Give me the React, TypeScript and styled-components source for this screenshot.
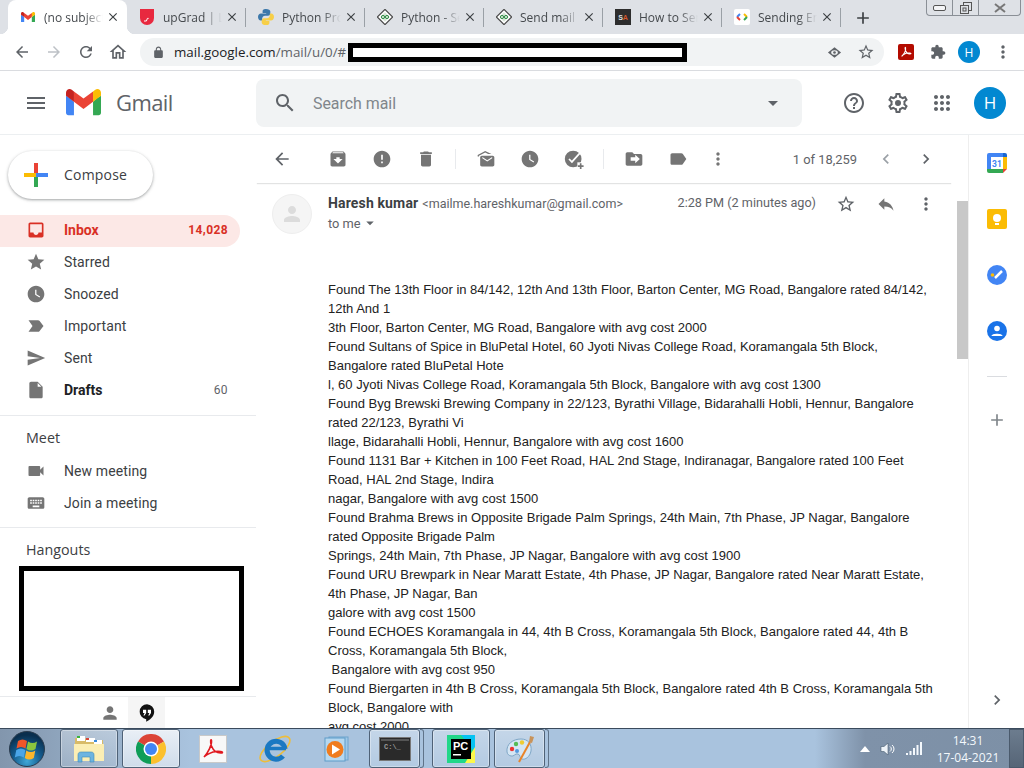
import styled, { createGlobalStyle } from "styled-components";

const Global = createGlobalStyle`
    html, body {
        margin: 0;
        padding: 0;
        overflow: hidden;
        background: #fff;
    }
`;

const ICON = {
    back: "M20 11H7.83l5.59-5.59L12 4l-8 8 8 8 1.41-1.41L7.83 13H20v-2z",
    forward: "M12 4l-1.41 1.41L16.17 11H4v2h12.17l-5.58 5.59L12 20l8-8z",
    reload: "M17.65 6.35C16.2 4.9 14.21 4 12 4c-4.42 0-7.99 3.58-7.99 8s3.57 8 7.99 8c3.73 0 6.84-2.55 7.73-6h-2.08c-.82 2.33-3.04 4-5.65 4-3.31 0-6-2.69-6-6s2.69-6 6-6c1.66 0 3.14.69 4.22 1.78L13 11h7V4l-2.35 2.35z",
    home: "M12 5.69l5 4.5V18h-2v-6H9v6H7v-7.81l5-4.5M12 3L2 12h3v8h6v-6h2v6h6v-8h3L12 3z",
    lock: "M18 8h-1V6c0-2.76-2.24-5-5-5S7 3.24 7 6v2H6c-1.1 0-2 .9-2 2v10c0 1.1.9 2 2 2h12c1.1 0 2-.9 2-2V10c0-1.1-.9-2-2-2zM9 6c0-1.66 1.34-3 3-3s3 1.34 3 3v2H9V6z",
    puzzle: "M20.5 11H19V7c0-1.1-.9-2-2-2h-4V3.5C13 2.12 11.88 1 10.5 1S8 2.12 8 3.5V5H4c-1.1 0-1.99.9-1.99 2v3.8H3.5c1.49 0 2.7 1.21 2.7 2.7s-1.21 2.7-2.7 2.7H2V20c0 1.1.9 2 2 2h3.8v-1.5c0-1.49 1.21-2.7 2.7-2.7 1.49 0 2.7 1.21 2.7 2.7V22H17c1.1 0 2-.9 2-2v-4h1.5c1.38 0 2.5-1.12 2.5-2.5S21.88 11 20.5 11z",
    search: "M15.5 14h-.79l-.28-.27C15.41 12.59 16 11.11 16 9.5 16 5.91 13.09 3 9.5 3S3 5.91 3 9.5 5.91 16 9.5 16c1.61 0 3.09-.59 4.23-1.57l.27.28v.79l5 4.99L20.49 19l-4.99-5zm-6 0C7.01 14 5 11.99 5 9.5S7.01 5 9.5 5 14 7.01 14 9.5 11.99 14 9.5 14z",
    menu: "M3 18h18v-2H3v2zm0-5h18v-2H3v2zm0-7v2h18V6H3z",
    help: "M11 18h2v-2h-2v2zm1-16C6.48 2 2 6.48 2 12s4.48 10 10 10 10-4.48 10-10S17.52 2 12 2zm0 18c-4.41 0-8-3.59-8-8s3.59-8 8-8 8 3.59 8 8-3.59 8-8 8zm0-14c-2.21 0-4 1.79-4 4h2c0-1.1.9-2 2-2s2 .9 2 2c0 2-3 1.75-3 5h2c0-2.25 3-2.5 3-5 0-2.21-1.79-4-4-4z",
    gear: "M19.43 12.98c.04-.32.07-.64.07-.98 0-.34-.03-.66-.07-.98l2.11-1.65c.19-.15.24-.42.12-.64l-2-3.46c-.09-.16-.26-.25-.44-.25-.06 0-.12.01-.17.03l-2.49 1c-.52-.4-1.08-.73-1.69-.98l-.38-2.65C14.46 2.18 14.25 2 14 2h-4c-.25 0-.46.18-.49.42l-.38 2.65c-.61.25-1.17.59-1.69.98l-2.49-1c-.06-.02-.12-.03-.18-.03-.17 0-.34.09-.43.25l-2 3.46c-.13.22-.07.49.12.64l2.11 1.65c-.04.32-.07.65-.07.98 0 .33.03.66.07.98l-2.11 1.65c-.19.15-.24.42-.12.64l2 3.46c.09.16.26.25.44.25.06 0 .12-.01.17-.03l2.49-1c.52.4 1.08.73 1.69.98l.38 2.65c.03.24.24.42.49.42h4c.25 0 .46-.18.49-.42l.38-2.65c.61-.25 1.17-.59 1.69-.98l2.49 1c.06.02.12.03.18.03.17 0 .34-.09.43-.25l2-3.46c.12-.22.07-.49-.12-.64l-2.11-1.65zm-1.98-1.71c.04.31.05.52.05.73 0 .21-.02.43-.05.73l-.14 1.13.89.7 1.08.84-.7 1.21-1.27-.51-1.04-.42-.9.68c-.43.32-.84.56-1.25.73l-1.06.43-.16 1.13-.2 1.35h-1.4l-.19-1.35-.16-1.13-1.06-.43c-.43-.18-.83-.41-1.23-.71l-.91-.7-1.06.43-1.27.51-.7-1.21 1.08-.84.89-.7-.14-1.13c-.03-.31-.05-.54-.05-.74s.02-.43.05-.73l.14-1.13-.89-.7-1.08-.84.7-1.21 1.27.51 1.04.42.9-.68c.43-.32.84-.56 1.25-.73l1.06-.43.16-1.13.2-1.35h1.39l.19 1.35.16 1.13 1.06.43c.43.18.83.41 1.23.71l.91.7 1.06-.43 1.27-.51.7 1.21-1.07.85-.89.7.14 1.13zM12 9a3 3 0 1 0 0 6 3 3 0 0 0 0-6z",
    inbox: "M19 3H4.99c-1.11 0-1.98.89-1.98 2L3 19c0 1.1.88 2 1.99 2H19c1.1 0 2-.9 2-2V5c0-1.11-.9-2-2-2zm0 12h-4c0 1.66-1.35 3-3 3s-3-1.34-3-3H4.99V5H19v10z",
    star: "M12 17.27L18.18 21l-1.64-7.03L22 9.24l-7.19-.61L12 2 9.19 8.63 2 9.24l5.46 4.73L5.82 21z",
    starLine: "M22 9.24l-7.19-.62L12 2 9.19 8.63 2 9.24l5.46 4.73L5.82 21 12 17.27 18.18 21l-1.63-7.03L22 9.24zM12 15.4l-3.76 2.27 1-4.28-3.32-2.88 4.38-.38L12 6.1l1.71 4.04 4.38.38-3.32 2.88 1 4.28L12 15.4z",
    clock: "M12 2C6.5 2 2 6.5 2 12s4.5 10 10 10 10-4.5 10-10S17.5 2 12 2zm4.2 14.2L11 13V7h1.5v5.2l4.5 2.7-.8 1.3z",
    important: "M3 19l11.5.01c.67 0 1.27-.33 1.63-.84L21 12l-4.87-6.16c-.36-.51-.96-.84-1.63-.84L3 5.01 7.84 12 3 19z",
    send: "M2.01 21L23 12 2.01 3 2 10l15 2-15 2z",
    file: "M14 2H6c-1.1 0-1.99.9-1.99 2L4 20c0 1.1.89 2 1.99 2H18c1.1 0 2-.9 2-2V8l-6-6zm0 1.5L18.5 8H14V3.5z",
    video: "M17 10.5V7c0-.55-.45-1-1-1H4c-.55 0-1 .45-1 1v10c0 .55.45 1 1 1h12c.55 0 1-.45 1-1v-3.5l4 4v-11l-4 4z",
    keyboard: "M20 5H4c-1.1 0-1.99.9-1.99 2L2 17c0 1.1.9 2 2 2h16c1.1 0 2-.9 2-2V7c0-1.1-.9-2-2-2zm-9 3h2v2h-2V8zm0 3h2v2h-2v-2zM8 8h2v2H8V8zm0 3h2v2H8v-2zm-1 2H5v-2h2v2zm0-3H5V8h2v2zm9 7H8v-2h8v2zm0-4h-2v-2h2v2zm0-3h-2V8h2v2zm3 3h-2v-2h2v2zm0-3h-2V8h2v2z",
    person: "M12 12c2.21 0 4-1.79 4-4s-1.79-4-4-4-4 1.79-4 4 1.79 4 4 4zm0 2c-2.67 0-8 1.34-8 4v2h16v-2c0-2.66-5.33-4-8-4z",
    archive: "M20.54 5.23l-1.39-1.68C18.88 3.21 18.47 3 18 3H6c-.47 0-.88.21-1.16.55L3.46 5.23C3.17 5.57 3 6.02 3 6.5V19c0 1.1.9 2 2 2h14c1.1 0 2-.9 2-2V6.5c0-.48-.17-.93-.46-1.27zM12 17.5L6.5 12H10v-2h4v2h3.5L12 17.5zM5.12 5l.81-1h12l.94 1H5.12z",
    spam: "M12 2C6.48 2 2 6.48 2 12s4.48 10 10 10 10-4.48 10-10S17.52 2 12 2zm1 15h-2v-2h2v2zm0-4h-2V7h2v6z",
    trash: "M6 19c0 1.1.9 2 2 2h8c1.1 0 2-.9 2-2V7H6v12zM19 4h-3.5l-1-1h-5l-1 1H5v2h14V4z",
    unread: "M2 9V7.200L11 2.500l7.500 3.500h-3.900L11 4.300 3.600 8.200 3.600 9H2zM7 8h13c1.100 0 2 .9 2 2v9c0 1.100-.9 2-2 2H7c-1.100 0-2-.9-2-2v-9c0-1.100.9-2 2-2zm.6 3l5.900 4 5.900-4V9.600l-5.900 3.900-5.900-3.900V11z",
    move: "M20 6h-8l-2-2H4c-1.1 0-1.99.9-1.99 2L2 18c0 1.1.9 2 2 2h16c1.1 0 2-.9 2-2V8c0-1.1-.9-2-2-2zm-6.5 11v-3H8v-4h5.5V7l5.5 5-5.5 5z",
    label: "M17.63 5.84C17.27 5.33 16.67 5 16 5L5 5.01C3.9 5.01 3 5.9 3 7v10c0 1.1.9 1.99 2 1.99L16 19c.67 0 1.27-.33 1.63-.84L22 12l-4.37-6.16z",
    reply: "M10 9V5l-7 7 7 7v-4.1c5 0 8.5 1.6 11 5.1-1-5-4-10-11-11z",
    more: "M12 8c1.1 0 2-.9 2-2s-.9-2-2-2-2 .9-2 2 .9 2 2 2zm0 2c-1.1 0-2 .9-2 2s.9 2 2 2 2-.9 2-2-.9-2-2-2zm0 6c-1.1 0-2 .9-2 2s.9 2 2 2 2-.9 2-2-.9-2-2-2z",
    prev: "M15.41 7.41L14 6l-6 6 6 6 1.41-1.41L10.83 12z",
    next: "M10 6L8.59 7.41 13.17 12l-4.58 4.59L10 18l6-6z",
    plus: "M19 13h-6v6h-2v-6H5v-2h6V5h2v6h6v2z",
    close: "M19 6.41L17.59 5 12 10.59 6.41 5 5 6.41 10.59 12 5 17.59 6.41 19 12 13.41 17.59 19 19 17.59 13.41 12z",
    caret: "M7 10l5 5 5-5z",
    apps: "M6 8c1.1 0 2-.9 2-2s-.9-2-2-2-2 .9-2 2 .9 2 2 2zm6 12c1.1 0 2-.9 2-2s-.9-2-2-2-2 .9-2 2 .9 2 2 2zm-6 0c1.1 0 2-.9 2-2s-.9-2-2-2-2 .9-2 2 .9 2 2 2zm0-6c1.1 0 2-.9 2-2s-.9-2-2-2-2 .9-2 2 .9 2 2 2zm6 0c1.1 0 2-.9 2-2s-.9-2-2-2-2 .9-2 2 .9 2 2 2zm4-8c0 1.1.9 2 2 2s2-.9 2-2-.9-2-2-2-2 .9-2 2zm-4 2c1.1 0 2-.9 2-2s-.9-2-2-2-2 .9-2 2 .9 2 2 2zm6 6c1.1 0 2-.9 2-2s-.9-2-2-2-2 .9-2 2 .9 2 2 2zm0 6c1.1 0 2-.9 2-2s-.9-2-2-2-2 .9-2 2 .9 2 2 2z",
};

const GlyphSvg = styled.svg<{ $size: number; $color: string }>`
    display: block;
    flex: none;
    width: ${(p) => p.$size}px;
    height: ${(p) => p.$size}px;
    fill: ${(p) => p.$color};
`;

const Art = styled.svg`
    display: block;
    flex: none;
`;

function Glyph({ d, size = 20, color = "#5f6368" }: { d: string; size?: number; color?: string }) {
    return (
        <GlyphSvg viewBox="0 0 24 24" $size={size} $color={color}>
            <path d={d} />
        </GlyphSvg>
    );
}

function GmailMark({ width }: { width: number }) {
    return (
        <Art viewBox="0 0 256 193" width={width} height={(width * 193) / 256}>
            <path fill="#4285F4" d="M58.182 192.05V93.14L27.507 65.077 0 49.504v125.091c0 9.658 7.825 17.455 17.455 17.455h40.727Z" />
            <path fill="#34A853" d="M197.818 192.05h40.727c9.659 0 17.455-7.826 17.455-17.455V49.505l-31.156 17.837-27.026 25.798v98.91Z" />
            <path fill="#EA4335" d="m58.182 93.14-4.174-38.647 4.174-36.989L128 69.868l69.818-52.364 4.669 34.992-4.669 40.644L128 145.504z" />
            <path fill="#FBBC04" d="M197.818 17.504V93.14L256 49.504V26.231c0-21.585-24.64-33.89-41.89-20.945l-16.292 12.218Z" />
            <path fill="#C5221F" d="m0 49.504 26.759 20.07L58.182 93.14V17.504L41.89 5.286C24.61-7.66 0 4.646 0 26.23v23.273Z" />
        </Art>
    );
}

function DiamondFavicon() {
    return (
        <Art viewBox="0 0 16 16" width="16" height="16">
            <rect x="2.6" y="2.6" width="10.8" height="10.8" transform="rotate(45 8 8)" fill="#fff" stroke="#4a4a4a" strokeWidth="1.2" />
            <rect x="4.6" y="4.6" width="6.8" height="6.8" transform="rotate(45 8 8)" fill="#d8e6d8" />
            <circle cx="6" cy="8" r="1.6" fill="none" stroke="#2f8d46" strokeWidth="1" />
            <circle cx="10" cy="8" r="1.6" fill="none" stroke="#2f8d46" strokeWidth="1" />
        </Art>
    );
}

const SaBadge = styled.span`
    display: flex;
    align-items: center;
    justify-content: center;
    width: 16px;
    height: 16px;
    background: #2d2d2d;
    color: #e0e0e0;
    font: bold 7px "Liberation Sans", sans-serif;
    span {
        color: #d4562a;
    }
`;

const TAB_ICONS = [
    <GmailMark width={14} key="g" />,
    <Art viewBox="0 0 16 16" width="16" height="16" key="u">
        <path d="M1 0h14v9a7 7 0 0 1-14 0z" fill="#e8293f" />
        <path d="M5 12h2.4l1-2.6h1.2" fill="none" stroke="#fff" strokeWidth="1" />
    </Art>,
    <Art viewBox="0 0 16 16" width="16" height="16" key="p">
        <path d="M8 0C5 0 4.6 1.2 4.6 2.6V4h3.6v.6H3C1.300 4.600 0 6 0 8s1.200 3.400 2.800 3.400h1.400V9.600c0-1.500 1.300-2.800 2.800-2.800h3c1.200 0 2.300-1 2.300-2.300V2.600C12.300 1 10.600 0 8 0z" fill="#3c78aa" />
        <path d="M8 16c3 0 3.400-1.200 3.400-2.600V12H7.800v-.6H13c1.700 0 3-1.400 3-3.400s-1.200-3.400-2.800-3.400h-1.400v1.800c0 1.500-1.300 2.800-2.800 2.800H6c-1.200 0-2.300 1-2.300 2.300v1.900C3.700 15 5.400 16 8 16z" fill="#f7cf48" />
    </Art>,
    <DiamondFavicon key="d1" />,
    <DiamondFavicon key="d2" />,
    <SaBadge key="s">
        S<span>A</span>
    </SaBadge>,
    <Art viewBox="0 0 16 16" width="16" height="16" key="c">
        <rect width="16" height="16" rx="2" fill="#fff" />
        <path d="M6 5L3 8" stroke="#4285f4" strokeWidth="2" />
        <path d="M3 8l3 3" stroke="#ea4335" strokeWidth="2" />
        <path d="M10 5l3 3" stroke="#fbbc04" strokeWidth="2" />
        <path d="M13 8l-3 3" stroke="#34a853" strokeWidth="2" />
    </Art>,
];

const TABS = ["(no subject)", "upGrad | Learn", "Python Program", "Python - Send", "Send mail from", "How to Send", "Sending Email"];

const Screen = styled.div`
    display: flex;
    flex-direction: column;
    width: 1024px;
    height: 768px;
    overflow: hidden;
    font-family: Roboto, "Liberation Sans", sans-serif;
    color: #202124;
`;

const TabStrip = styled.div`
    display: flex;
    flex: none;
    height: 34px;
    padding-left: 8px;
    background: #dee1e6;
`;

const Tab = styled.div<{ $active: boolean; $edge: boolean }>`
    position: relative;
    display: flex;
    align-items: center;
    box-sizing: border-box;
    width: 119px;
    padding: 0 7px 0 12px;
    background: ${(p) => (p.$active ? "#fff" : "transparent")};
    border-radius: 8px 8px 0 0;

    &::after {
        content: "";
        display: ${(p) => (p.$edge ? "block" : "none")};
        position: absolute;
        right: 0;
        top: 8px;
        bottom: 7px;
        width: 1px;
        background: #9aa0a6;
    }

    &::before {
        content: "";
        display: ${(p) => (p.$active ? "block" : "none")};
        position: absolute;
        left: -8px;
        right: -8px;
        bottom: 0;
        height: 8px;
        background:
            radial-gradient(circle at 0 0, #dee1e6 8px, #fff 8.5px) left / 8px 8px no-repeat,
            radial-gradient(circle at 100% 0, #dee1e6 8px, #fff 8.5px) right / 8px 8px no-repeat;
    }
`;

const TabIcon = styled.span`
    display: flex;
    justify-content: center;
    width: 16px;
    flex: none;
`;

const TabTitle = styled.span`
    flex: 1;
    min-width: 0;
    margin-left: 8px;
    overflow: hidden;
    white-space: nowrap;
    font: 12px "Open Sans", sans-serif;
    color: #45494d;
    -webkit-mask-image: linear-gradient(90deg, #000 65%, transparent 95%);
    mask-image: linear-gradient(90deg, #000 65%, transparent 95%);
`;

const NewTab = styled.span`
    margin: 1px 0 0 12px;
    align-self: center;
`;

const WindowControls = styled.div`
    display: flex;
    align-self: flex-start;
    box-sizing: border-box;
    height: 16px;
    margin: 0 3px 0 auto;
    border: 1px solid #8a8f96;
    border-top: 0;
    border-radius: 0 0 4px 4px;
`;

const WindowButton = styled.span<{ $width: number }>`
    display: flex;
    align-items: center;
    justify-content: center;
    width: ${(p) => p.$width}px;
    border-right: 1px solid #8a8f96;
    &:last-child {
        border-right: 0;
    }
`;

const Toolbar = styled.div`
    display: flex;
    flex: none;
    align-items: center;
    box-sizing: border-box;
    height: 37px;
    padding-left: 6px;
    border-bottom: 1px solid #dadce0;
`;

const ToolSlot = styled.span<{ $width?: number }>`
    display: flex;
    align-items: center;
    justify-content: center;
    width: ${(p) => p.$width ?? 32}px;
    flex: none;
`;

const Omnibox = styled.div`
    display: flex;
    flex: none;
    align-items: center;
    width: 744px;
    height: 28px;
    margin: 0 6px;
    border-radius: 14px;
    background: #f1f3f4;
`;

const LockIcon = styled.span`
    margin-left: 12px;
`;

const Url = styled.span`
    margin-left: 9px;
    font: 13.35px "Open Sans", sans-serif;
    white-space: nowrap;
    color: #5f6368;
    b {
        font-weight: 400;
        color: #202124;
    }
`;

const Redaction = styled.span`
    display: block;
    flex: none;
    box-sizing: border-box;
    width: 339px;
    height: 19px;
    margin-left: 2px;
    border: 5px solid #000;
    background: #fff;
`;

const OmniTools = styled.span`
    display: flex;
    align-items: center;
    margin-left: auto;
    margin-right: 2px;
`;

const AcrobatTile = styled.span`
    display: flex;
    align-items: center;
    justify-content: center;
    width: 16px;
    height: 16px;
    border-radius: 2px;
    background: #b30b00;
`;

const SmallAvatar = styled.span`
    display: flex;
    align-items: center;
    justify-content: center;
    width: 22px;
    height: 22px;
    border-radius: 50%;
    background: #0288d1;
    color: #fff;
    font: 12px "Open Sans", sans-serif;
`;

const AppHeader = styled.header`
    display: flex;
    flex: none;
    align-items: center;
    box-sizing: border-box;
    height: 64px;
    border-bottom: 1px solid #eceff1;
`;

const MenuSlot = styled.span`
    display: flex;
    justify-content: center;
    width: 48px;
    margin-left: 12px;
    margin-right: 6px;
`;

const Wordmark = styled.span`
    width: 140px;
    margin-left: 15px;
    padding-bottom: 2px;
    font: 22px "Open Sans", sans-serif;
    letter-spacing: -0.6px;
    color: #5f6368;
`;

const SearchBar = styled.div`
    display: flex;
    align-items: center;
    box-sizing: border-box;
    width: 546px;
    height: 48px;
    padding: 0 17px 0 17px;
    border-radius: 8px;
    background: #f1f3f4;
`;

const SearchText = styled.span`
    flex: 1;
    margin-left: 16px;
    padding-top: 1px;
    font-size: 15.9px;
    color: #80868b;
`;

const HeaderTools = styled.div`
    display: flex;
    align-items: center;
    margin-left: 30px;
`;

const HeaderSlot = styled.span`
    display: flex;
    justify-content: center;
    width: 44px;
`;

const Avatar = styled.span`
    display: flex;
    align-items: center;
    justify-content: center;
    width: 32px;
    height: 32px;
    margin-left: 10px;
    border-radius: 50%;
    background: #0288d1;
    color: #fff;
    font: 17px "Open Sans", sans-serif;
`;

const Workspace = styled.div`
    display: flex;
    flex: 1;
    min-height: 0;
`;

const Sidebar = styled.aside`
    display: flex;
    flex-direction: column;
    flex: none;
    width: 256px;
`;

const Compose = styled.div`
    display: flex;
    align-items: center;
    box-sizing: border-box;
    width: 145px;
    height: 48px;
    margin: 16px 0 16px 8px;
    padding-left: 16px;
    border-radius: 24px;
    background: #fff;
    box-shadow: 0 1px 2px rgba(60, 64, 67, 0.3), 0 1px 3px 1px rgba(60, 64, 67, 0.15);
    font: 500 14px "Open Sans", sans-serif;
    letter-spacing: 0.2px;
    color: #3c4043;
`;

const ComposeLabel = styled.span`
    margin-left: 16px;
    padding-bottom: 2px;
`;

const NavRow = styled.div<{ $active?: boolean; $bold?: boolean }>`
    display: flex;
    align-items: center;
    box-sizing: border-box;
    width: 240px;
    height: 32px;
    padding: 0 12px 2px 26px;
    border-radius: 0 16px 16px 0;
    background: ${(p) => (p.$active ? "#fce8e6" : "transparent")};
    font-size: 14px;
    font-weight: ${(p) => (p.$bold || p.$active ? 700 : 400)};
    letter-spacing: ${(p) => (p.$bold || p.$active ? 0 : 0.1)}px;
    color: ${(p) => (p.$active ? "#d93025" : p.$bold ? "#202124" : "#3c4043")};
`;

const NavLabel = styled.span`
    flex: 1;
    margin-left: 18px;
`;

const NavCount = styled.span<{ $active?: boolean }>`
    font-size: 12px;
    font-weight: ${(p) => (p.$active ? 700 : 400)};
    letter-spacing: 0.4px;
    color: ${(p) => (p.$active ? "#d93025" : "#5f6368")};
`;

const Rule = styled.div<{ $top: number }>`
    flex: none;
    height: 1px;
    margin-top: ${(p) => p.$top}px;
    background: #e8eaed;
`;

const SectionTitle = styled.div`
    height: 18px;
    margin: 13px 0 0 26px;
    font: 14.3px/18px "Open Sans", sans-serif;
    color: #3c4043;
`;

const MeetList = styled.div`
    margin-top: 9px;
`;

const HangoutsBox = styled.div`
    box-sizing: border-box;
    width: 225px;
    height: 125px;
    margin: 7px 0 5px 19px;
    border: 5px solid #000;
    background: #fff;
`;

const SideFooter = styled.div`
    display: flex;
    flex: 1;
    justify-content: center;
    border-top: 1px solid #e8eaed;
`;

const FooterSlot = styled.span<{ $on?: boolean }>`
    display: flex;
    align-items: center;
    justify-content: center;
    width: 37px;
    background: ${(p) => (p.$on ? "#f5f5f5" : "transparent")};
`;

const Main = styled.main`
    display: flex;
    flex-direction: column;
    flex: 1;
    min-width: 0;
`;

const ActionBar = styled.div`
    display: flex;
    flex: none;
    align-items: center;
    position: relative;
    box-sizing: border-box;
    width: 696px;
    height: 48px;
    padding: 0 6px;
    box-shadow: 0 2px 1px -1px rgba(60, 64, 67, 0.15);
`;

const ActionSlot = styled.span<{ $left?: number }>`
    display: flex;
    justify-content: center;
    width: 40px;
    flex: none;
    margin-left: ${(p) => p.$left ?? 0}px;
`;

const ActionDivider = styled.span`
    width: 1px;
    height: 20px;
    margin: 0 10px 0 9px;
    background: #e8eaed;
`;

const Pager = styled.span`
    margin: 0 9px 0 auto;
    font-size: 12.9px;
    color: #5f6368;
`;

const Reader = styled.div`
    display: flex;
    flex: 1;
    min-height: 0;
`;

const Message = styled.div`
    flex: 1;
    min-width: 0;
    overflow: hidden;
`;

const MessageHead = styled.div`
    display: flex;
    box-sizing: border-box;
    height: 61px;
    padding: 11px 11px 0 16px;
`;

const Face = styled.span`
    display: flex;
    align-items: center;
    justify-content: center;
    flex: none;
    box-sizing: border-box;
    width: 40px;
    height: 40px;
    border: 1px solid #eeeeee;
    border-radius: 50%;
    background: #f5f5f5;
`;

const Sender = styled.div`
    flex: 1;
    margin-left: 16px;
`;

const SenderLine = styled.div`
    height: 19px;
    font: 700 14px/18px Roboto, sans-serif;
    letter-spacing: 0.15px;
    color: #3c4043;
`;

const SenderMail = styled.span`
    margin-left: 4px;
    font-size: 12.5px;
    font-weight: 400;
    letter-spacing: 0;
    color: #5f6368;
`;

const ToMe = styled.div`
    display: flex;
    align-items: center;
    height: 20px;
    font-size: 12.8px;
    color: #5f6368;
`;

const Stamp = styled.span`
    height: 18px;
    margin-right: 10px;
    font-size: 12.65px;
    line-height: 18px;
    color: #5f6368;
`;

const HeadSlot = styled.span`
    display: flex;
    justify-content: center;
    width: 40px;
    height: 20px;
    flex: none;
`;

const MessageBody = styled.div`
    padding: 36px 0 0 72px;
    font: 13px/19px "Liberation Sans", Arial, sans-serif;
    color: #222;
    white-space: pre;
`;

const ScrollTrack = styled.div`
    flex: none;
    width: 11px;
    padding-top: 18px;
`;

const ScrollThumb = styled.div`
    height: 158px;
    background: #c8c8c8;
`;

const SidePanel = styled.aside`
    display: flex;
    flex-direction: column;
    align-items: center;
    flex: none;
    box-sizing: border-box;
    width: 56px;
    padding-top: 18px;
    border-left: 1px solid #eeeeee;
`;

const PanelSlot = styled.span<{ $gap?: number }>`
    display: flex;
    align-items: center;
    justify-content: center;
    height: 20px;
    margin-bottom: ${(p) => p.$gap ?? 36}px;
`;

const PanelRule = styled.span`
    width: 20px;
    height: 1px;
    margin-bottom: 33px;
    background: #dadce0;
`;

const PanelArrow = styled.span`
    display: block;
    margin-top: 260px;
`;

const Taskbar = styled.footer`
    display: flex;
    flex: none;
    align-items: stretch;
    box-sizing: border-box;
    height: 40px;
    border-top: 1px solid #3a4a5c;
    background: linear-gradient(90deg, #8296ad 0, #8ea4bc 58px, #a9c3de 190px, #a9c3de 815px, #7f92a9 865px, #7d90a6 100%);
`;

const Orb = styled.span`
    display: flex;
    align-items: center;
    width: 60px;
    padding-left: 9px;
    box-sizing: border-box;
    flex: none;
`;

const TaskButton = styled.span<{ $width?: number; $bright?: boolean; $gap?: number }>`
    position: relative;
    display: flex;
    align-items: center;
    justify-content: center;
    flex: none;
    box-sizing: border-box;
    width: ${(p) => p.$width ?? 58}px;
    margin-right: ${(p) => p.$gap ?? 4}px;
    border: 1px solid #4f6277;
    border-radius: 3px;
    background: ${(p) =>
        p.$bright
            ? "linear-gradient(180deg, #e9eff6, #cfdcea)"
            : "linear-gradient(180deg, rgba(255,255,255,.32), rgba(255,255,255,.12))"};
    box-shadow: inset 0 0 0 1px rgba(255, 255, 255, 0.35);
`;

const TaskStack = styled.span`
    width: 3px;
    flex: none;
    margin-right: 8px;
    border: 1px solid #5f7389;
    border-left: 0;
    border-radius: 0 3px 3px 0;
`;

const TaskPlain = styled.span<{ $width: number }>`
    display: flex;
    align-items: center;
    justify-content: center;
    flex: none;
    width: ${(p) => p.$width}px;
`;

const Tray = styled.div`
    display: flex;
    align-items: center;
    margin-left: auto;
`;

const TrayIcon = styled.span<{ $width: number; $left?: number; $right?: number }>`
    display: flex;
    justify-content: center;
    width: ${(p) => p.$width}px;
    margin-left: ${(p) => p.$left ?? 0}px;
    margin-right: ${(p) => p.$right ?? 0}px;
`;

const Clock = styled.div`
    width: 82px;
    font: 12px/17px "Open Sans", sans-serif;
    color: #f4f8fc;
    text-align: center;
`;

const ShowDesktop = styled.span`
    align-self: stretch;
    width: 15px;
    box-sizing: border-box;
    border: 1px solid #4a5a6c;
    background: linear-gradient(180deg, #6c7c8e, #566577);
`;

const LINES = [
    "Found The 13th Floor in 84/142, 12th And 13th Floor, Barton Center, MG Road, Bangalore rated 84/142,",
    "12th And 1",
    "3th Floor, Barton Center, MG Road, Bangalore with avg cost 2000",
    "Found Sultans of Spice in BluPetal Hotel, 60 Jyoti Nivas College Road, Koramangala 5th Block,",
    "Bangalore rated BluPetal Hote",
    "l, 60 Jyoti Nivas College Road, Koramangala 5th Block, Bangalore with avg cost 1300",
    "Found Byg Brewski Brewing Company in 22/123, Byrathi Village, Bidarahalli Hobli, Hennur, Bangalore",
    "rated 22/123, Byrathi Vi",
    "llage, Bidarahalli Hobli, Hennur, Bangalore with avg cost 1600",
    "Found 1131 Bar + Kitchen in 100 Feet Road, HAL 2nd Stage, Indiranagar, Bangalore rated 100 Feet",
    "Road, HAL 2nd Stage, Indira",
    "nagar, Bangalore with avg cost 1500",
    "Found Brahma Brews in Opposite Brigade Palm Springs, 24th Main, 7th Phase, JP Nagar, Bangalore",
    "rated Opposite Brigade Palm",
    "Springs, 24th Main, 7th Phase, JP Nagar, Bangalore with avg cost 1900",
    "Found URU Brewpark in Near Maratt Estate, 4th Phase, JP Nagar, Bangalore rated Near Maratt Estate,",
    "4th Phase, JP Nagar, Ban",
    "galore with avg cost 1500",
    "Found ECHOES Koramangala in 44, 4th B Cross, Koramangala 5th Block, Bangalore rated 44, 4th B",
    "Cross, Koramangala 5th Block,",
    " Bangalore with avg cost 950",
    "Found Biergarten in 4th B Cross, Koramangala 5th Block, Bangalore rated 4th B Cross, Koramangala 5th",
    "Block, Bangalore with",
    "avg cost 2000",
];

const NAV = [
    { label: "Inbox", d: ICON.inbox, count: "14,028", active: true },
    { label: "Starred", d: ICON.star },
    { label: "Snoozed", d: ICON.clock },
    { label: "Important", d: ICON.important },
    { label: "Sent", d: ICON.send },
    { label: "Drafts", d: ICON.file, count: "60", bold: true },
];

function AddTaskIcon() {
    return (
        <Art viewBox="0 0 24 24" width="20" height="20">
            <circle cx="11" cy="12" r="10" fill="#757575" />
            <path d="M6 12l3.500 3.500L19 5" fill="none" stroke="#fff" strokeWidth="2" />
            <path d="M19 3l2 2" stroke="#fff" strokeWidth="1" />
            <path d="M16 16h8v8h-8z" fill="#fff" />
            <path d="M19 17h2v2.500h2.500v2H21V24h-2v-2.500h-2.500v-2H19z" fill="#757575" />
        </Art>
    );
}

function ChromeLogo() {
    return (
        <Art viewBox="0 0 30 30" width="30" height="30">
            <path fill="#db4437" d="M15 15L2 7.500A15 15 0 0 1 28 7.500Z" />
            <path fill="#fbc02d" d="M15 15L28 7.500A15 15 0 0 1 15 30Z" />
            <path fill="#0f9d58" d="M15 15L15 30A15 15 0 0 1 2 7.500Z" />
            <circle cx="15" cy="15" r="7.500" fill="#fff" />
            <circle cx="15" cy="15" r="6" fill="#4285f4" />
        </Art>
    );
}

function WindowsOrb() {
    return (
        <Art viewBox="0 0 36 36" width="36" height="36">
            <defs>
                <radialGradient id="orb" cx="50%" cy="85%" r="75%">
                    <stop offset="0" stopColor="#3fa8d8" />
                    <stop offset="0.55" stopColor="#135a8c" />
                    <stop offset="1" stopColor="#0a2f4e" />
                </radialGradient>
            </defs>
            <circle cx="18" cy="18" r="17.500" fill="url(#orb)" stroke="#2a3b4d" />
            <path d="M9 10c3-2 6-2 9 0l-1.500 7.500c-3-2-6-2-9 0z" fill="#f0562a" />
            <path d="M19 10.500c3 2 6 2 9 0l-1.500 7.500c-3 2-6 2-9 0z" fill="#8cc63f" />
            <path d="M7.300 19c3-2 6-2 9 0l-1.500 7.500c-3-2-6-2-9 0z" fill="#4aa5e8" />
            <path d="M17.300 19.500c3 2 6 2 9 0l-1.500 7.500c-3 2-6 2-9 0z" fill="#fbb62c" />
        </Art>
    );
}

function FolderLogo() {
    return (
        <Art viewBox="0 0 32 28" width="32" height="28">
            <path d="M2 3h10l2 2h16v20H2z" fill="#d8bb68" />
            <rect x="4" y="1" width="8" height="5" fill="#fff" />
            <rect x="4" y="1" width="3" height="2" fill="#3cb43c" />
            <rect x="13" y="3" width="9" height="4" fill="#fff" />
            <rect x="13" y="3" width="3" height="2" fill="#d8483c" />
            <rect x="21" y="5" width="8" height="4" fill="#fff" />
            <rect x="21" y="5" width="3" height="2" fill="#3c8cdc" />
            <path d="M1 9h30v17H1z" fill="#fbeeb4" />
            <path d="M5 27v-7c0-2 1-3 3-3h10c2 0 3 1 3 3v7h-4v-5H9v5z" fill="#6db4e0" stroke="#3d89bb" strokeWidth=".6" />
        </Art>
    );
}

function PdfTile() {
    return (
        <Art viewBox="0 0 28 28" width="28" height="28">
            <rect x=".5" y=".5" width="27" height="27" fill="#f8f8f8" stroke="#c9c9c9" />
            <path d="M5 22C9 18 13 10 12.500 5.500C12 3.500 10.800 6 12.500 11C14.500 16 18 18.500 23 18C25 17 20 15.500 14 17C10 18.500 6.500 20 5 22Z" fill="none" stroke="#e0181f" strokeWidth="1.600" />
        </Art>
    );
}

function IeLogo() {
    return (
        <Art viewBox="0 0 34 32" width="34" height="32">
            <ellipse cx="17" cy="16" rx="18" ry="7.500" transform="rotate(-38 17 16)" fill="none" stroke="#eebd3a" strokeWidth="1.600" />
            <path d="M27 16A9 9 0 1 0 25 23" fill="none" stroke="#1a78c2" strokeWidth="5" />
            <path d="M11 15.500h17" stroke="#1a78c2" strokeWidth="3.500" />
        </Art>
    );
}

function PlayerLogo() {
    return (
        <Art viewBox="0 0 28 26" width="28" height="26">
            <rect x="6" y="1" width="19" height="23" fill="#9fc8e8" stroke="#6ea4cc" />
            <rect x="2" y="2" width="20" height="23" fill="#b6d8f0" stroke="#5f9cc8" />
            <circle cx="12" cy="13.500" r="8.500" fill="#f07c1e" />
            <path d="M9 8.500l8 5-8 5z" fill="#fff" />
        </Art>
    );
}

function ConsoleLogo() {
    return (
        <Art viewBox="0 0 32 24" width="32" height="24">
            <rect x=".5" y=".5" width="31" height="23" fill="#2a2a2a" stroke="#777" />
            <rect x="2" y="2" width="28" height="2" fill="#555" />
            <text x="5" y="12" fontFamily="Liberation Mono, monospace" fontSize="7" fontWeight="700" fill="#9a9a9a">C:\_</text>
        </Art>
    );
}

function PycharmLogo() {
    return (
        <Art viewBox="0 0 28 28" width="28" height="28">
            <rect width="28" height="28" fill="#21d789" />
            <path d="M14 0h14v18z" fill="#07c3f2" />
            <path d="M28 12v16H18z" fill="#fcf84a" />
            <rect x="4" y="4" width="20" height="20" fill="#000" />
            <text x="6" y="15" fontFamily="Liberation Sans, sans-serif" fontSize="11" fontWeight="700" fill="#fff">PC</text>
            <rect x="6" y="19" width="8" height="1.500" fill="#fff" />
        </Art>
    );
}

function PaintLogo() {
    return (
        <Art viewBox="0 0 30 30" width="30" height="30">
            <path d="M2 18C1 10 8 5 16 5c7 0 11 5 10 12-1 6-6 9-9 8-3-1-1-4-4-5-3-1-4 3-7 2-2-.5-3.500-1.500-4-4z" fill="#d5e6f4" stroke="#7ea6c6" />
            <circle cx="7" cy="15" r="2.200" fill="#e33" />
            <circle cx="11" cy="10" r="2.200" fill="#5b5" />
            <circle cx="17" cy="8.500" r="2.200" fill="#ec3" />
            <circle cx="12" cy="17" r="2" fill="#59d" />
            <path d="M14 28L25 8" stroke="#e8842a" strokeWidth="2" />
            <path d="M24 8l1-6 4 1-2 6z" fill="#c8935a" />
        </Art>
    );
}

export default function App() {
    return (
        <Screen>
            <Global />
            <TabStrip>
                {TABS.map((title, i) => (
                    <Tab key={title + i} $active={i === 0} $edge={i > 0}>
                        <TabIcon>{TAB_ICONS[i]}</TabIcon>
                        <TabTitle>{title}</TabTitle>
                        <Glyph d={ICON.close} size={14} color="#3c4043" />
                    </Tab>
                ))}
                <NewTab>
                    <Glyph d={ICON.plus} size={20} color="#3c4043" />
                </NewTab>
                <WindowControls>
                    <WindowButton $width={25}>
                        <svg width="13" height="6"><rect x=".5" y=".5" width="12" height="5" rx="1.500" fill="#f4f5f7" stroke="#555" /></svg>
                    </WindowButton>
                    <WindowButton $width={25}>
                        <svg width="12" height="12"><rect x="3.500" y=".5" width="8" height="8" fill="none" stroke="#555" /><rect x=".5" y="3.500" width="8" height="8" fill="#dee1e6" stroke="#555" /><rect x="3" y="6" width="3" height="3" fill="none" stroke="#555" /></svg>
                    </WindowButton>
                    <WindowButton $width={41}>
                        <svg width="12" height="10"><path d="M1 1l10 8M11 1L1 9" stroke="#777" strokeWidth="2" fill="none" /></svg>
                    </WindowButton>
                </WindowControls>
            </TabStrip>

            <Toolbar>
                <ToolSlot><Glyph d={ICON.back} size={18} color="#5f6368" /></ToolSlot>
                <ToolSlot><Glyph d={ICON.forward} size={18} color="#bdc1c6" /></ToolSlot>
                <ToolSlot><Glyph d={ICON.reload} size={18} color="#5f6368" /></ToolSlot>
                <ToolSlot><Glyph d={ICON.home} size={20} color="#5f6368" /></ToolSlot>
                <Omnibox>
                    <LockIcon><Glyph d={ICON.lock} size={13} color="#5f6368" /></LockIcon>
                    <Url><b>mail.google.com</b>/mail/u/0/#</Url>
                    <Redaction />
                    <OmniTools>
                        <ToolSlot>
                            <svg viewBox="0 0 16 16" width="15" height="15"><path d="M8 2.500L15 8l-7 5.500L1 8z" fill="#5f6368" /><path d="M4.500 8a3.500 2.500 0 0 1 7 0a3.500 2.500 0 0 1-7 0z" fill="#f1f3f4" /><circle cx="8" cy="8" r="1.400" fill="#5f6368" /></svg>
                        </ToolSlot>
                        <ToolSlot><Glyph d={ICON.starLine} size={18} color="#5f6368" /></ToolSlot>
                    </OmniTools>
                </Omnibox>
                <ToolSlot $width={32}>
                    <AcrobatTile>
                        <svg viewBox="0 0 16 16" width="14" height="14"><path d="M3 13C5.500 10.500 8 6 7.500 3C7 2 6.500 3.500 7.500 6.500C8.500 9 11 10.500 13.500 10C14.500 9.500 11.500 8.500 8 9.500C6 10.500 4 11.500 3 13Z" fill="none" stroke="#fff" strokeWidth="1.200" /></svg>
                    </AcrobatTile>
                </ToolSlot>
                <ToolSlot $width={32}><Glyph d={ICON.puzzle} size={16} color="#5f6368" /></ToolSlot>
                <ToolSlot $width={30}><SmallAvatar>H</SmallAvatar></ToolSlot>
                <ToolSlot $width={38}><Glyph d={ICON.more} size={20} color="#5f6368" /></ToolSlot>
            </Toolbar>

            <AppHeader>
                <MenuSlot><Glyph d={ICON.menu} size={24} /></MenuSlot>
                <GmailMark width={35} />
                <Wordmark>Gmail</Wordmark>
                <SearchBar>
                    <Glyph d={ICON.search} size={24} />
                    <SearchText>Search mail</SearchText>
                    <Glyph d={ICON.caret} size={24} />
                </SearchBar>
                <HeaderTools>
                    <HeaderSlot><Glyph d={ICON.help} size={24} /></HeaderSlot>
                    <HeaderSlot><Glyph d={ICON.gear} size={24} /></HeaderSlot>
                    <HeaderSlot><Glyph d={ICON.apps} size={24} /></HeaderSlot>
                    <Avatar>H</Avatar>
                </HeaderTools>
            </AppHeader>

            <Workspace>
                <Sidebar>
                    <Compose>
                        <Art viewBox="0 0 24 24" width="24" height="24">
                            <rect x="10" y="0" width="4" height="12" fill="#ea4335" />
                            <rect x="10" y="12" width="4" height="12" fill="#34a853" />
                            <rect x="0" y="10" width="12" height="4" fill="#fbbc04" />
                            <rect x="12" y="10" width="12" height="4" fill="#4285f4" />
                        </Art>
                        <ComposeLabel>Compose</ComposeLabel>
                    </Compose>
                    {NAV.map((n) => (
                        <NavRow key={n.label} $active={n.active} $bold={n.bold}>
                            <Glyph d={n.d} size={20} color={n.active ? "#d93025" : "#757575"} />
                            <NavLabel>{n.label}</NavLabel>
                            {n.count && <NavCount $active={n.active}>{n.count}</NavCount>}
                        </NavRow>
                    ))}
                    <Rule $top={8} />
                    <SectionTitle>Meet</SectionTitle>
                    <MeetList>
                        <NavRow>
                            <Glyph d={ICON.video} size={20} color="#757575" />
                            <NavLabel>New meeting</NavLabel>
                        </NavRow>
                        <NavRow>
                            <Glyph d={ICON.keyboard} size={20} color="#757575" />
                            <NavLabel>Join a meeting</NavLabel>
                        </NavRow>
                    </MeetList>
                    <Rule $top={7} />
                    <SectionTitle>Hangouts</SectionTitle>
                    <HangoutsBox />
                    <SideFooter>
                        <FooterSlot><Glyph d={ICON.person} size={20} color="#757575" /></FooterSlot>
                        <FooterSlot $on>
                            <Art viewBox="0 0 20 22" width="16" height="18">
                                <path d="M10 0a9.500 9.500 0 0 0-1 18.900V22c4-2 10-6 10-12.500A9.500 9.500 0 0 0 10 0z" fill="#111" />
                                <path d="M5 7h4v4l-2 3H5.500L7 11H5zM11 7h4v4l-2 3h-1.500L13 11h-2z" fill="#fff" />
                            </Art>
                        </FooterSlot>
                    </SideFooter>
                </Sidebar>

                <Main>
                    <ActionBar>
                        <ActionSlot><Glyph d={ICON.back} /></ActionSlot>
                        <ActionSlot $left={16}><Glyph d={ICON.archive} color="#757575" /></ActionSlot>
                        <ActionSlot $left={4}><Glyph d={ICON.spam} color="#757575" /></ActionSlot>
                        <ActionSlot $left={4}><Glyph d={ICON.trash} color="#757575" /></ActionSlot>
                        <ActionDivider />
                        <ActionSlot><Glyph d={ICON.unread} color="#757575" /></ActionSlot>
                        <ActionSlot $left={4}><Glyph d={ICON.clock} color="#757575" /></ActionSlot>
                        <ActionSlot $left={4}><AddTaskIcon /></ActionSlot>
                        <ActionDivider />
                        <ActionSlot><Glyph d={ICON.move} color="#757575" /></ActionSlot>
                        <ActionSlot $left={4}><Glyph d={ICON.label} color="#757575" /></ActionSlot>
                        <ActionSlot><Glyph d={ICON.more} color="#757575" /></ActionSlot>
                        <Pager>1 of 18,259</Pager>
                        <ActionSlot><Glyph d={ICON.prev} color="#9aa0a6" /></ActionSlot>
                        <ActionSlot><Glyph d={ICON.next} color="#5f6368" /></ActionSlot>
                    </ActionBar>
                    <Reader>
                        <Message>
                            <MessageHead>
                                <Face><Glyph d={ICON.person} size={24} color="#dcdcdc" /></Face>
                                <Sender>
                                    <SenderLine>
                                        Haresh kumar<SenderMail>&lt;mailme.hareshkumar@gmail.com&gt;</SenderMail>
                                    </SenderLine>
                                    <ToMe>
                                        to me
                                        <Glyph d={ICON.caret} size={18} />
                                    </ToMe>
                                </Sender>
                                <Stamp>2:28 PM (2 minutes ago)</Stamp>
                                <HeadSlot><Glyph d={ICON.starLine} color="#5f6368" /></HeadSlot>
                                <HeadSlot><Glyph d={ICON.reply} color="#757575" /></HeadSlot>
                                <HeadSlot><Glyph d={ICON.more} color="#5f6368" /></HeadSlot>
                            </MessageHead>
                            <MessageBody>
                                {LINES.map((l, i) => (
                                    <div key={i}>{l}</div>
                                ))}
                            </MessageBody>
                        </Message>
                        <ScrollTrack>
                            <ScrollThumb />
                        </ScrollTrack>
                    </Reader>
                </Main>

                <SidePanel>
                    <PanelSlot>
                        <Art viewBox="0 0 20 20" width="20" height="20">
                            <rect width="20" height="20" rx="2" fill="#fff" />
                            <path d="M2 0h14v4H4v12H0V2a2 2 0 0 1 2-2z" fill="#4285f4" />
                            <path d="M16 0h2a2 2 0 0 1 2 2v2h-4z" fill="#1967d2" />
                            <path d="M16 4h4v12h-4z" fill="#fbbc04" />
                            <path d="M0 16h16v4H2a2 2 0 0 1-2-2z" fill="#34a853" />
                            <path d="M16 16h4l-4 4z" fill="#ea4335" />
                            <text x="10" y="14" textAnchor="middle" fontFamily="Roboto, sans-serif" fontSize="8.500" fontWeight="700" fill="#4285f4">31</text>
                        </Art>
                    </PanelSlot>
                    <PanelSlot>
                        <Art viewBox="0 0 20 20" width="20" height="20">
                            <rect width="20" height="20" rx="2" fill="#fbbc04" />
                            <circle cx="10" cy="9" r="4" fill="#fff" />
                            <rect x="8" y="14" width="4" height="2" fill="#fff" />
                        </Art>
                    </PanelSlot>
                    <PanelSlot>
                        <Art viewBox="0 0 20 20" width="20" height="20">
                            <circle cx="10" cy="10" r="10" fill="#4285f4" />
                            <path d="M8 13l7-7" stroke="#fff" strokeWidth="2.500" />
                            <circle cx="5.500" cy="10" r="1.800" fill="#fbbc04" />
                        </Art>
                    </PanelSlot>
                    <PanelSlot $gap={35}>
                        <Art viewBox="0 0 20 20" width="20" height="20">
                            <circle cx="10" cy="10" r="10" fill="#1a73e8" />
                            <circle cx="10" cy="7.500" r="2.800" fill="#fff" />
                            <path d="M4.500 15c0-3 11-3 11 0z" fill="#fff" />
                        </Art>
                    </PanelSlot>
                    <PanelRule />
                    <PanelSlot $gap={0}>
                        <Glyph d={ICON.plus} color="#80868b" />
                    </PanelSlot>
                    <PanelArrow><Glyph d={ICON.next} color="#5f6368" /></PanelArrow>
                </SidePanel>
            </Workspace>

            <Taskbar>
                <Orb><WindowsOrb /></Orb>
                <TaskButton><FolderLogo /></TaskButton>
                <TaskButton $bright $gap={0}><ChromeLogo /></TaskButton>
                <TaskPlain $width={66}><PdfTile /></TaskPlain>
                <TaskPlain $width={58}><IeLogo /></TaskPlain>
                <TaskPlain $width={65}><PlayerLogo /></TaskPlain>
                <TaskButton $width={51} $gap={0}><ConsoleLogo /></TaskButton>
                <TaskStack />
                <TaskButton $gap={4}><PycharmLogo /></TaskButton>
                <TaskButton $width={51} $gap={0}><PaintLogo /></TaskButton>
                <TaskStack />
                <Tray>
                    <TrayIcon $width={22}>
                        <svg width="10" height="6"><path d="M5 0l5 6H0z" fill="#fff" /></svg>
                    </TrayIcon>
                    <TrayIcon $width={24}>
                        <svg viewBox="0 0 16 14" width="16" height="14"><path d="M1 4.500h3L8 1v12L4 9.500H1z" fill="#eef3f8" stroke="#475a6e" strokeWidth=".6" /><path d="M10 4.500a3 3 0 0 1 0 5M12 3a5 5 0 0 1 0 8" fill="none" stroke="#fff" /></svg>
                    </TrayIcon>
                    <TrayIcon $width={20} $left={4} $right={3}>
                        <svg width="16" height="13"><path d="M0 11h2v2H0zM3.500 9h2v4h-2zM7 6h2v7H7zM10.500 3h2v10h-2zM14 0h2v13h-2z" fill="#f4f8fc" /></svg>
                    </TrayIcon>
                    <Clock>
                        14:31
                        <br />
                        17-04-2021
                    </Clock>
                    <ShowDesktop />
                </Tray>
            </Taskbar>
        </Screen>
    );
}
